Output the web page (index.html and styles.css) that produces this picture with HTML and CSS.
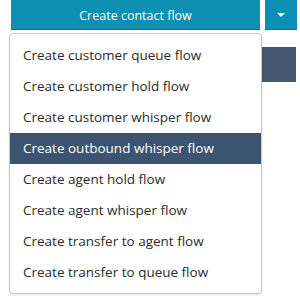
FILE: index.html
```html
<!DOCTYPE html>
<html>
<head>
<meta charset="utf-8">
<link rel="stylesheet" href="styles.css">
</head>
<body>
<div class="page">
  <div class="toolbar">
    <button class="btn-main">Create contact flow</button>
    <button class="btn-caret"><span class="caret"></span></button>
  </div>
  <div class="content">
    <div class="tile"></div>
  </div>
  <ul class="menu">
    <li class="item">Create customer queue flow</li>
    <li class="item">Create customer hold flow</li>
    <li class="item">Create customer whisper flow</li>
    <li class="item active">Create outbound whisper flow</li>
    <li class="item">Create agent hold flow</li>
    <li class="item">Create agent whisper flow</li>
    <li class="item">Create transfer to agent flow</li>
    <li class="item">Create transfer to queue flow</li>
  </ul>
</div>
</body>
</html>
```
FILE: styles.css
```css
html, body {
  margin: 0;
  padding: 0;
  background: #ffffff;
}
.page {
  position: relative;
  width: 300px;
  height: 298px;
  font-family: "Open Sans", Lato, sans-serif;
}
.toolbar {
  display: flex;
  gap: 5px;
  padding-left: 11px;
}
.btn-main {
  width: 249px;
  height: 30px;
  border: 0;
  border-bottom: 1px solid #0a7694;
  background: #0c8fb0;
  color: #ffffff;
  font-family: inherit;
  font-size: 12.5px;
  padding: 1px 0 0;
  margin: 0;
}
.btn-caret {
  width: 32px;
  height: 30px;
  border: 0;
  border-bottom: 1px solid #0a7694;
  background: #0c8fb0;
  padding: 0;
  margin: 0;
  display: flex;
  align-items: center;
  justify-content: center;
}
.caret {
  width: 0;
  height: 0;
  border-left: 4px solid transparent;
  border-right: 4px solid transparent;
  border-top: 4px solid #ffffff;
}
.content {
  display: flex;
  justify-content: flex-end;
  padding-top: 17px;
  padding-right: 4px;
}
.tile {
  width: 35px;
  height: 35px;
  background: #435870;
}
.menu {
  position: absolute;
  left: 9px;
  top: 33px;
  width: 251px;
  margin: 0;
  padding: 6px 0 5px;
  list-style: none;
  background: #ffffff;
  border: 1px solid #c8c8c8;
  border-radius: 4px;
  box-shadow: 0 1px 2px rgba(0,0,0,0.12);
}
.item {
  height: 31px;
  line-height: 31px;
  padding-left: 13px;
  font-size: 13.5px;
  color: #2b2b2b;
  white-space: nowrap;
}
.item.active {
  background: #3d5471;
  color: #ffffff;
}
```
